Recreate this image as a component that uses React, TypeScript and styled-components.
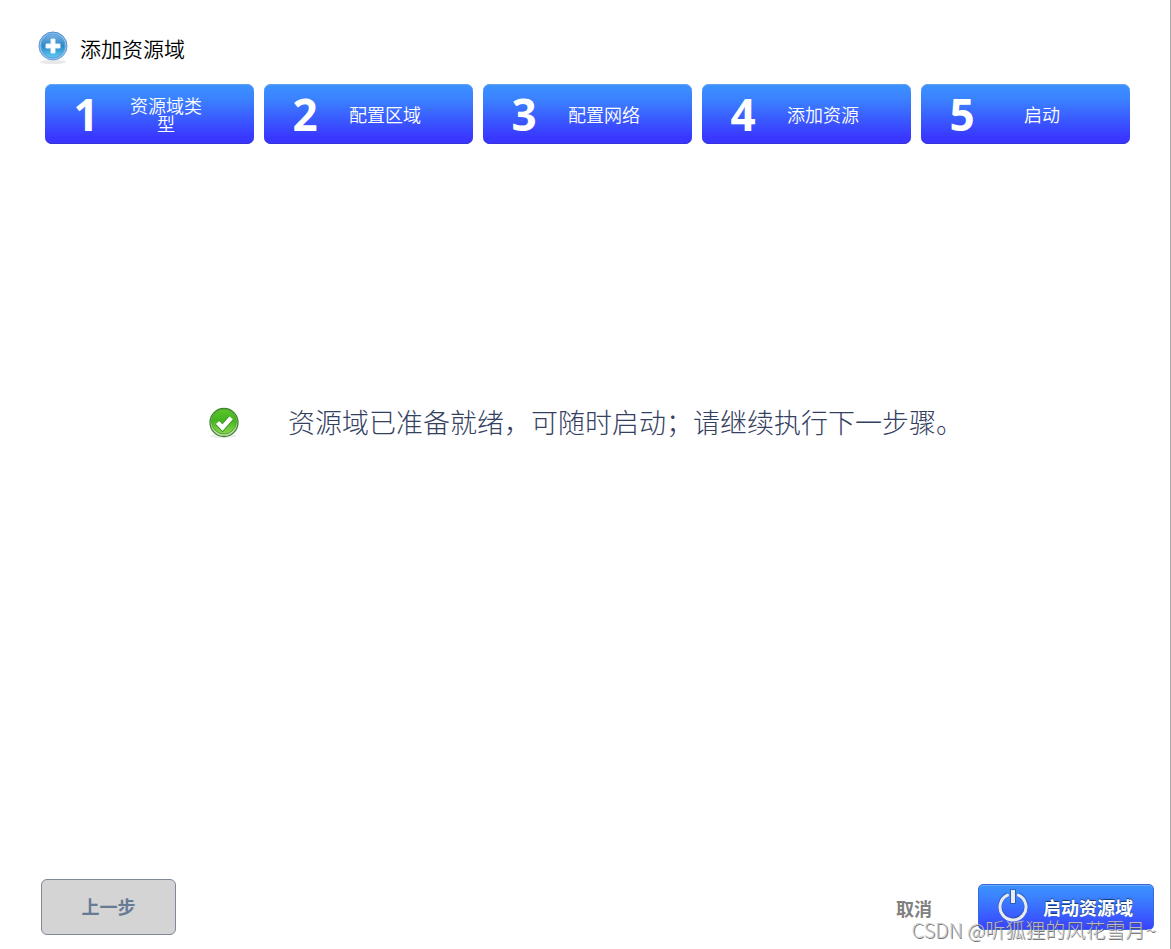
import React from "react";
import styled, { createGlobalStyle } from "styled-components";

const GlobalStyle = createGlobalStyle`
  * { box-sizing: border-box; }
  body {
    margin: 0;
    background: #fff;
    color: #000;
    font-family: "Noto Sans", "Noto Sans CJK SC", sans-serif;
  }
`;

const Wizard = styled.div`
  display: flex;
  flex-direction: column;
  min-height: 100vh;
  padding-bottom: 14px;
  border-right: 1px solid #a8a8a8;
`;

const Header = styled.header`
  display: flex;
  align-items: center;
  gap: 12px;
  height: 36px;
  margin: 30px 0 0 38px;
`;

const Title = styled.h1`
  margin: 0;
  font-size: 21px;
  line-height: 30px;
  font-weight: 350;
  font-family: "Noto Sans CJK SC", sans-serif;
`;

const Steps = styled.ol`
  display: grid;
  grid-template-columns: repeat(5, 1fr);
  gap: 10px;
  margin: 18px 40px 0 45px;
  padding: 0;
  list-style: none;
`;

const Step = styled.li`
  display: flex;
  align-items: center;
  height: 60px;
  padding-left: 26px;
  border-radius: 7px;
  color: #fff;
  background: linear-gradient(#3b92ff 0%, #3b82ff 25%, #3936ff 90%);
  box-shadow: inset 0 1px 0 #62a4f4, inset 0 -1px 0 #3733d8;
`;

const StepNumber = styled.span`
  width: 30px;
  text-align: center;
  font-family: "Noto Sans", sans-serif;
  font-size: 44px;
  line-height: 60px;
  font-weight: 700;
`;

const StepLabel = styled.span`
  width: 80px;
  margin-left: 25px;
  text-align: center;
  font-family: "Noto Sans CJK SC", sans-serif;
  font-size: 18px;
  line-height: 18px;
  font-weight: 350;
`;

const Content = styled.main`
  flex: 1;
  display: flex;
  align-items: flex-start;
  padding: 258px 40px 40px 208px;
`;

const Message = styled.p`
  margin: 0 0 0 48px;
  color: #34405f;
  font-family: "Noto Sans CJK SC", sans-serif;
  font-size: 27px;
  line-height: 40px;
  font-weight: 300;
`;

const StatusIcon = styled.span`
  display: flex;
  align-items: center;
  height: 42px;
`;

const Footer = styled.footer`
  position: relative;
  display: flex;
  align-items: flex-start;
  padding: 0 16px 0 41px;
`;

const BaseButton = styled.button`
  margin: 0;
  padding: 0;
  font-family: "Noto Sans CJK SC", sans-serif;
  font-size: 18px;
  line-height: 26px;
  font-weight: 700;
  cursor: pointer;
`;

const PreviousButton = styled(BaseButton)`
  width: 135px;
  height: 56px;
  padding-bottom: 2px;
  border: 1px solid #808797;
  border-radius: 6px;
  background: #d4d4d4;
  color: #677b95;
`;

const CancelButton = styled(BaseButton)`
  margin: 16px 46px 0 auto;
  border: 0;
  background: none;
  color: #808080;
`;

const LaunchButton = styled(BaseButton)`
  display: flex;
  align-items: center;
  gap: 13px;
  width: 176px;
  height: 46px;
  margin-top: 5px;
  padding: 0 0 0 19px;
  border: 1px solid #3468dc;
  border-radius: 5px;
  background: linear-gradient(#3b92ff 0%, #3b84ff 25%, #3942ff 100%);
  box-shadow: inset 0 1px 0 #68a9fa;
  color: #fff;
  text-shadow: 0 -1px 1px #153d66;
`;

const Watermark = styled.span`
  position: absolute;
  right: 14px;
  bottom: -9px;
  color: rgba(200, 200, 200, 0.9);
  font-family: "Noto Sans CJK SC", sans-serif;
  font-size: 20px;
  line-height: 28px;
  font-weight: 300;
  text-shadow: 1px 1px 0 rgba(85, 85, 85, 0.8);
  white-space: nowrap;
  pointer-events: none;
`;

const AddIcon = () => (
  <svg width="30" height="34" viewBox="0 0 30 34" aria-hidden="true">
    <defs>
      <linearGradient id="addFill" x1="0" y1="0" x2="0" y2="1">
        <stop offset="0" stopColor="#7ab2e4" />
        <stop offset="0.5" stopColor="#2b88c8" />
        <stop offset="1" stopColor="#62ccf4" />
      </linearGradient>
      <linearGradient id="addRing" x1="0" y1="0" x2="0" y2="1">
        <stop offset="0" stopColor="#4a88d0" />
        <stop offset="1" stopColor="#6aa2e0" />
      </linearGradient>
    </defs>
    <ellipse cx="15" cy="31" rx="13" ry="2" fill="#e9e9e9" />
    <circle cx="15" cy="15" r="14" fill="#8fc2ec" stroke="url(#addRing)" />
    <circle cx="15" cy="15" r="12" fill="url(#addFill)" stroke="#5aa0da" />
    <path d="M13 8h4v5h5v4h-5v5h-4v-5H8v-4h5z" fill="#fff" stroke="#e4f2fc" strokeWidth="1" strokeLinejoin="round" />
  </svg>
);

const CheckIcon = () => (
  <svg width="32" height="32" viewBox="0 0 32 32" aria-hidden="true">
    <defs>
      <linearGradient id="okFill" x1="0" y1="0" x2="0" y2="1">
        <stop offset="0" stopColor="#5cc62c" />
        <stop offset="0.45" stopColor="#44b41e" />
        <stop offset="1" stopColor="#8ad94a" />
      </linearGradient>
    </defs>
    <ellipse cx="15" cy="29" rx="13" ry="2" fill="#ededed" />
    <circle cx="16" cy="15.5" r="14" fill="#c6dfb0" stroke="#39862b" strokeWidth="1.3" />
    <circle cx="16" cy="14.5" r="12.5" fill="url(#okFill)" stroke="#4aa52a" />
    <path d="M9.5 15.5l5 5.2 8.7-10" fill="none" stroke="#318d1c" strokeWidth="6" />
    <path d="M9.5 15.5l5 5.2 8.7-10" fill="none" stroke="#fff" strokeWidth="4.6" />
  </svg>
);

const PowerIcon = () => (
  <svg width="32" height="36" viewBox="0 0 32 36" fill="none" aria-hidden="true">
    <g stroke="#27529b" opacity="0.65">
      <path d="M9.5 5.4a13 13 0 1 0 11 0" strokeWidth="4" />
      <path d="M15 0v15" strokeWidth="6" />
    </g>
    <g stroke="#e9ebee">
      <path d="M9.5 6.2a13 13 0 1 0 11 0" strokeWidth="3" strokeLinecap="round" />
      <path d="M15 1v13" strokeWidth="4" />
    </g>
  </svg>
);

const STEPS = ["资源域类型", "配置区域", "配置网络", "添加资源", "启动"];

export default function App() {
  return (
    <>
      <GlobalStyle />
      <Wizard>
        <Header>
          <AddIcon />
          <Title>添加资源域</Title>
        </Header>
        <Steps>
          {STEPS.map((label, index) => (
            <Step key={label}>
              <StepNumber>{index + 1}</StepNumber>
              <StepLabel>{label}</StepLabel>
            </Step>
          ))}
        </Steps>
        <Content>
          <StatusIcon>
            <CheckIcon />
          </StatusIcon>
          <Message>资源域已准备就绪，可随时启动；请继续执行下一步骤。</Message>
        </Content>
        <Footer>
          <PreviousButton type="button">上一步</PreviousButton>
          <CancelButton type="button">取消</CancelButton>
          <LaunchButton type="button">
            <PowerIcon />
            启动资源域
          </LaunchButton>
          <Watermark>CSDN @听狐狸的风花雪月~</Watermark>
        </Footer>
      </Wizard>
    </>
  );
}
